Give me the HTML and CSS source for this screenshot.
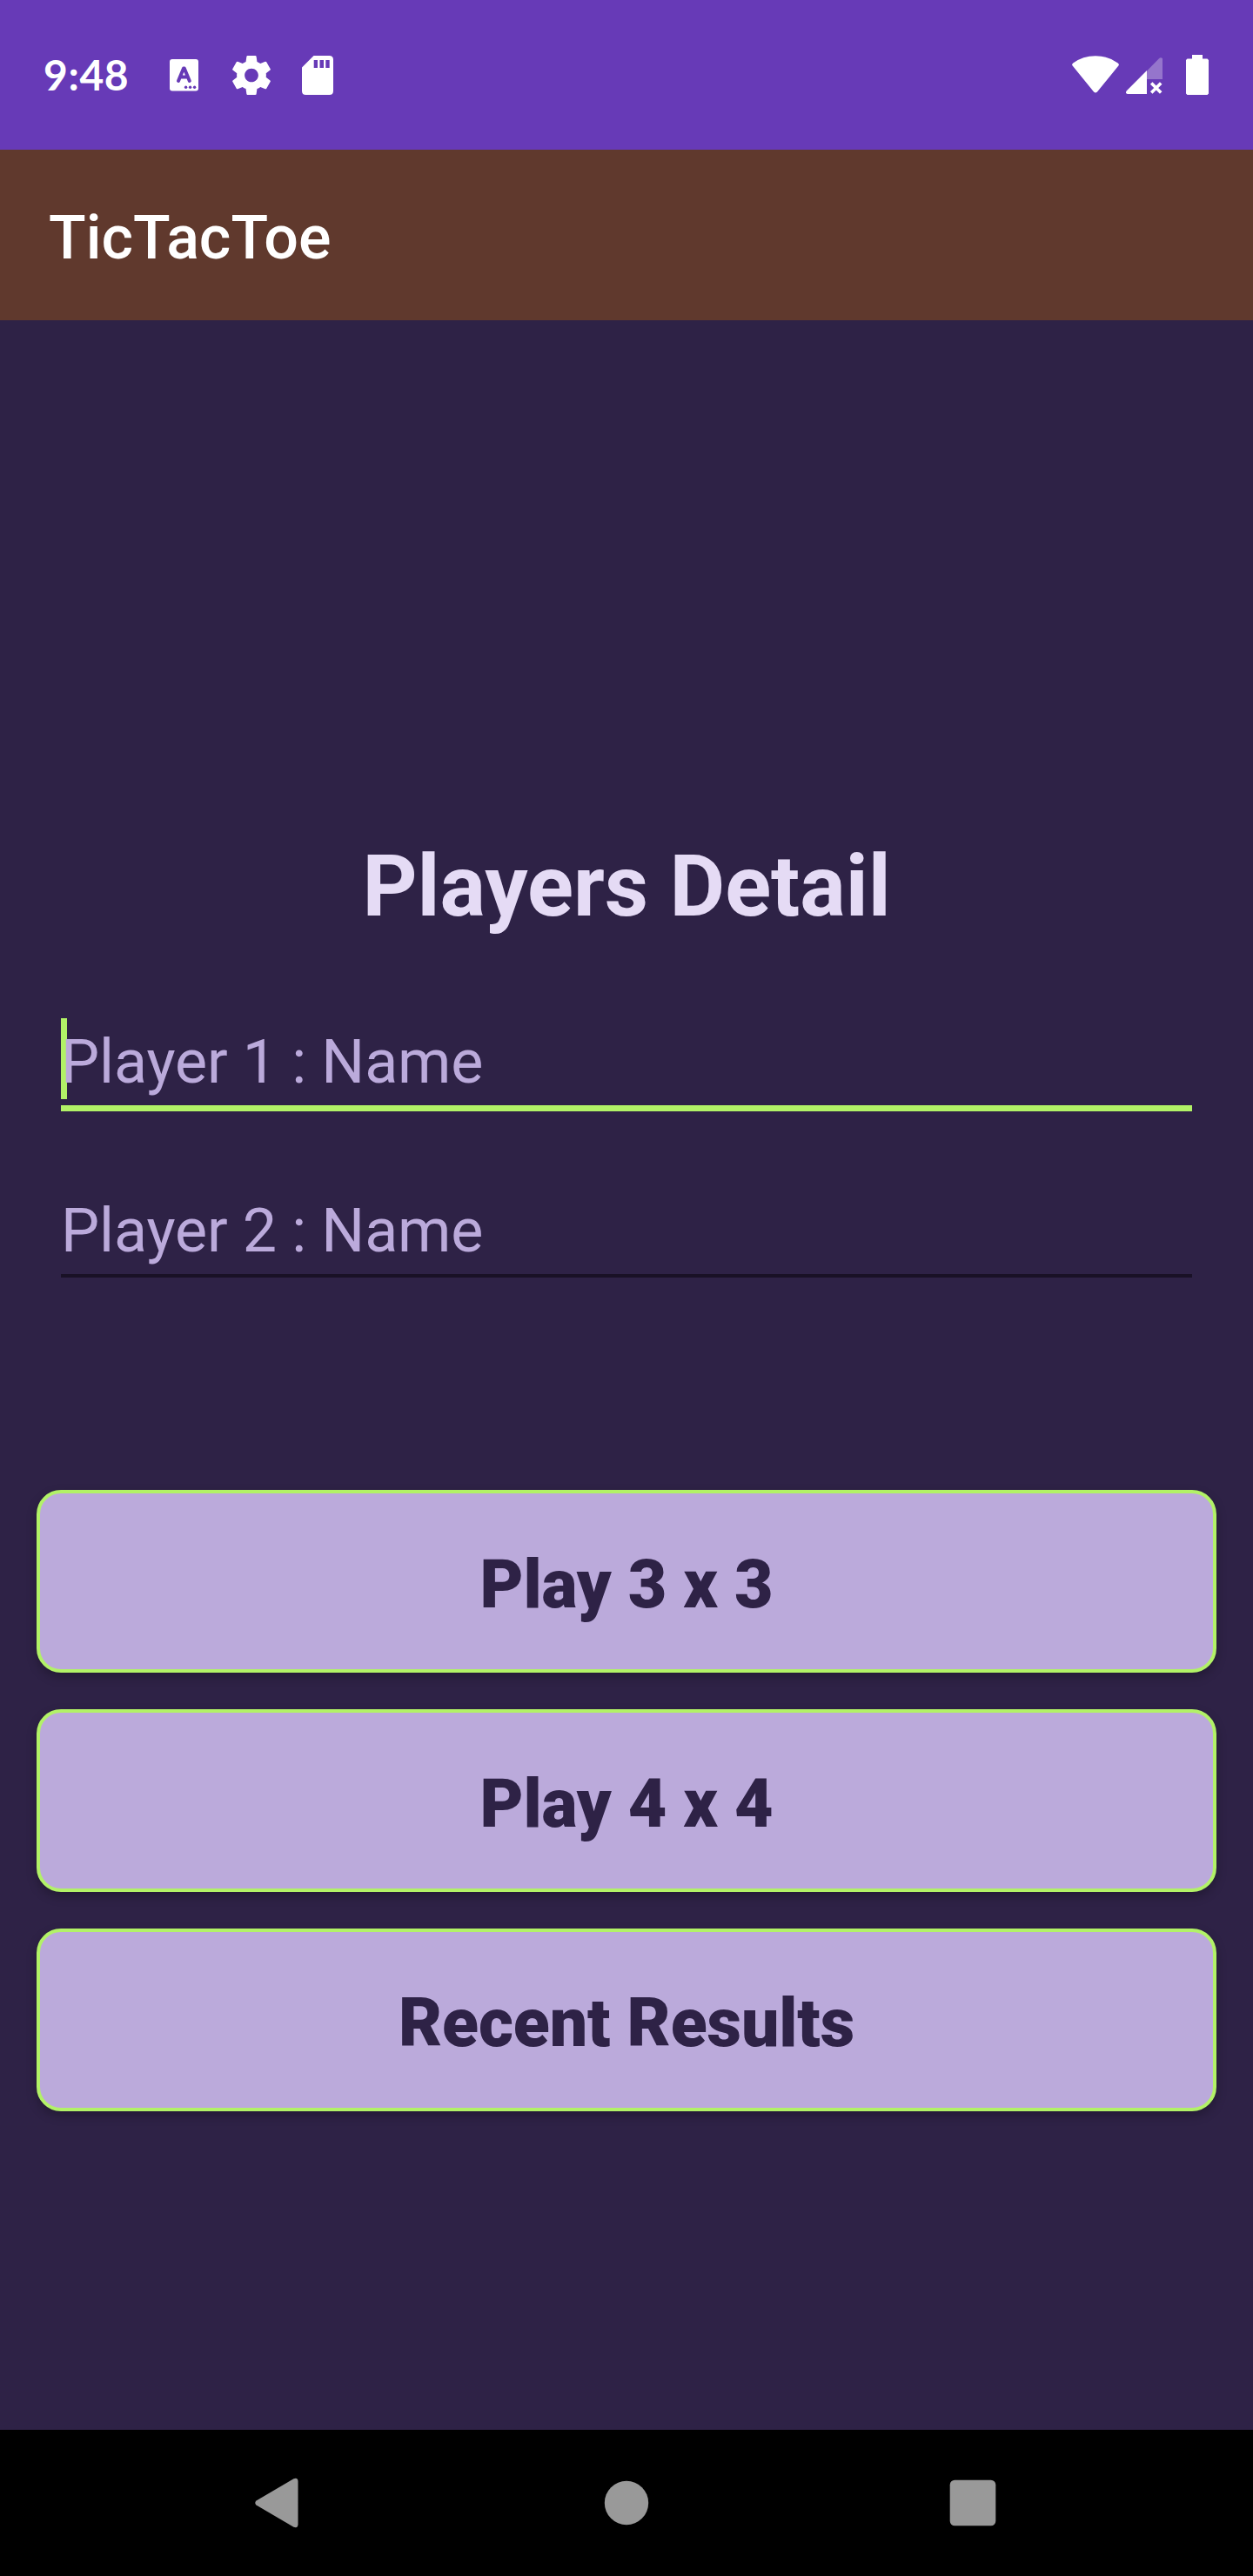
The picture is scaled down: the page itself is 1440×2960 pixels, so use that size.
FILE: index.html
```html
<!DOCTYPE html>
<html lang="en">
<head>
<meta charset="utf-8">
<title>TicTacToe</title>
<link rel="stylesheet" href="styles.css">
</head>
<body>
<div class="screen">
  <header class="status-bar">
    <span class="clock">9:48</span>
    <svg class="icon-keyboard" width="33" height="37" viewBox="0 0 33 37">
      <path fill="#fff" d="M3 0h27a3 3 0 0 1 3 3v30.500a3 3 0 0 1-3 3H3a3 3 0 0 1-3-3V3a3 3 0 0 1 3-3z"/>
      <path fill="none" stroke="#673ab7" stroke-width="4" stroke-linecap="round" stroke-linejoin="round" d="M10 25l6-14.500h.800l6 14.500M12.500 20.500h8"/>
      <g fill="#673ab7"><circle cx="18.600" cy="32.300" r="1.700"/><circle cx="23.600" cy="32.300" r="1.700"/><circle cx="28.600" cy="32.300" r="1.700"/></g>
    </svg>
    <svg class="icon-gear" width="44" height="45" viewBox="2.220 2 19.560 20">
      <path fill="#fff" d="M19.430 12.980c.04-.32.07-.64.07-.98s-.03-.66-.07-.98l2.110-1.650c.19-.15.24-.42.12-.64l-2-3.460c-.12-.22-.39-.3-.61-.22l-2.490 1c-.52-.4-1.080-.73-1.690-.98l-.38-2.650C14.460 2.180 14.250 2 14 2h-4c-.25 0-.46.18-.49.42l-.38 2.650c-.61.25-1.170.59-1.690.98l-2.490-1c-.23-.09-.49 0-.61.22l-2 3.460c-.13.22-.07.49.12.64l2.110 1.650c-.04.32-.07.65-.07.98s.03.66.07.98l-2.110 1.650c-.19.15-.24.42-.12.64l2 3.460c.12.22.39.3.61.22l2.490-1c.52.4 1.080.73 1.690.98l.38 2.650c.03.24.24.42.49.42h4c.25 0 .46-.18.49-.42l.38-2.650c.61-.25 1.170-.59 1.690-.98l2.490 1c.23.09.49 0 .61-.22l2-3.460c.12-.22.07-.49-.12-.64l-2.110-1.650zM12 15.500c-1.930 0-3.500-1.570-3.500-3.500s1.570-3.500 3.500-3.500 3.500 1.570 3.500 3.500-1.570 3.500-3.500 3.500z"/>
    </svg>
    <svg class="icon-card" width="36" height="45" viewBox="0 0 36 45">
      <path fill="#fff" fill-rule="evenodd" d="M13.500 0H31.500Q36 0 36 4.500V40.500Q36 45 31.500 45H4.500Q0 45 0 40.500V13.500zM13.700 5v9H18V5zM20.500 5v9H25V5zM27.300 5v9h4.400V5z"/>
    </svg>
    <div class="status-right">
      <svg class="icon-wifi" width="54" height="43" viewBox="0 0 54 43">
        <path fill="#fff" d="M.8 11.800Q-.8 10 1.200 8.400Q12.500.2 27 .2T52.800 8.400Q54.800 10 53.200 11.800L29 41.500Q27 43.600 25 41.500z"/>
      </svg>
      <svg class="icon-signal" width="42" height="43" viewBox="0 0 42 43">
        <path fill="#fff" fill-opacity=".3" d="M24 15.500L38 1.200Q40-.6 42 1.200V25H24z"/>
        <path fill="#fff" d="M24 15V42H1.800Q-1.200 41.500.6 38.400z"/>
        <path stroke="#fff" stroke-width="3.600" d="M29.200 29.500L40.200 40.500M40.200 29.500L29.200 40.500"/>
      </svg>
      <svg class="icon-battery" width="26" height="46" viewBox="0 0 26 46">
        <path fill="#fff" d="M7 0H19V4.500H24.500L26 6V44.500L24.500 46H1.500L0 44.500V6L1.500 4.500H7z"/>
      </svg>
    </div>
  </header>

  <div class="app-bar"><span class="app-title">TicTacToe</span></div>

  <main class="content">
    <h1 class="heading">Players Detail</h1>
    <div class="field field-active"><span class="caret"></span><span class="hint">Player 1 : Name</span></div>
    <div class="field"><span class="hint">Player 2 : Name</span></div>
    <div class="actions">
      <button class="action">Play 3 x 3</button>
      <button class="action">Play 4 x 4</button>
      <button class="action">Recent Results</button>
    </div>
  </main>

  <nav class="nav-bar">
    <svg class="nav-back" width="50" height="58" viewBox="0 0 50 58">
      <path fill="#999" d="M1.500 26.500L44.500 1.300Q49.500-.5 49.500 4.500V53.500Q49.500 58.500 44.500 56.700L1.500 31.500Q-1 29 1.500 26.500z"/>
    </svg>
    <svg class="nav-home" width="52" height="52" viewBox="0 0 52 52"><circle cx="26" cy="26" r="25.200" fill="#999"/></svg>
    <svg class="nav-recent" width="54" height="54" viewBox="0 0 54 54"><rect x=".7" y=".7" width="52.600" height="52.600" rx="5.500" fill="#999"/></svg>
  </nav>
</div>
</body>
</html>
```
FILE: styles.css
```css
* { box-sizing: border-box; }

body {
  margin: 0;
  background: #2e2246;
  font-family: Roboto, "Liberation Sans", sans-serif;
}

svg { display: block; flex: none; }

.screen {
  width: 1440px;
  height: 2960px;
  display: flex;
  flex-direction: column;
  overflow: hidden;
}

.status-bar {
  height: 172px;
  flex: none;
  display: flex;
  align-items: center;
  padding: 0 51px 0 50px;
  background: #673ab7;
  color: #fff;
}

.clock {
  width: 145px;
  font: 700 48px/60px Lato, sans-serif;
  letter-spacing: .6px;
}

.icon-gear { margin-left: 39px; }
.icon-card { margin-left: 36px; }

.status-right {
  display: flex;
  align-items: center;
  margin-left: auto;
}

.icon-wifi { margin-bottom: 2px; }
.icon-signal { margin: 3px 27px 0 8px; }

.app-bar {
  height: 196px;
  flex: none;
  display: flex;
  align-items: center;
  padding: 6px 56px 0;
  background: #60392d;
}

.app-title {
  color: #fff;
  font-size: 70px;
  font-weight: 500;
  line-height: 82px;
}

.content {
  flex: 1;
  display: flex;
  flex-direction: column;
  padding: 593px 42px 0;
}

.heading {
  margin: 0 0 67px;
  color: #e5dbf5;
  font-size: 98px;
  font-weight: 700;
  line-height: 115px;
  text-align: center;
}

.field {
  position: relative;
  height: 131px;
  margin: 0 28px 60px;
  padding-top: 36px;
  border-bottom: 4px solid #191126;
  color: #bbaadb;
  font-size: 70px;
  line-height: 82px;
  letter-spacing: -.12px;
}

.field-active {
  height: 134px;
  border-bottom: 7px solid #b2f267;
}

.caret {
  position: absolute;
  left: 0;
  top: 27px;
  width: 7px;
  height: 93px;
  background: #b2f267;
}

.hint { position: relative; }

.actions {
  display: flex;
  flex-direction: column;
  gap: 42px;
  margin-top: 184px;
}

.action {
  height: 210px;
  padding: 8px 0 0;
  border: 4px solid #b2f267;
  border-radius: 28px;
  background: #bbaadb;
  box-shadow: 0 5px 12px rgba(0, 0, 0, .25);
  color: #2e2246;
  font: 900 77px/90px Roboto, "Liberation Sans", sans-serif;
  letter-spacing: -.1px;
}

.nav-bar {
  height: 168px;
  flex: none;
  display: flex;
  align-items: center;
  justify-content: space-between;
  padding: 0 295px 0 293px;
  background: #000;
}

.nav-home { margin-left: 6px; }
```
